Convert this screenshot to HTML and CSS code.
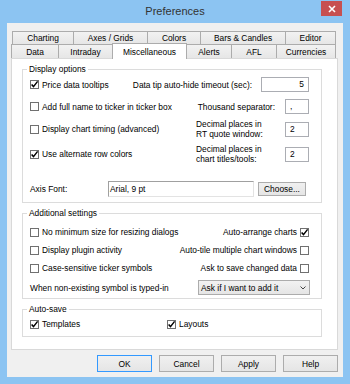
FILE: index.html
```html
<!DOCTYPE html>
<html lang="en">
<head>
  <meta charset="UTF-8">
  <title>Preferences</title>
  <link rel="stylesheet" href="styles.css">
</head>
<body>
  <div class="window">

    <!-- Title bar -->
    <div class="titlebar">
      <div class="title">Preferences</div>
      <div class="close">
        <svg width="8" height="8" viewBox="0 0 8 8"><path d="M1 1 L7 7 M7 1 L1 7" stroke="#fff" stroke-width="1.6"/></svg>
      </div>
    </div>

    <div class="client">

      <!-- Tabs -->
      <div class="tabs">
        <div class="tab-row back">
          <div class="tab t-charting">Charting</div>
          <div class="tab t-axes">Axes / Grids</div>
          <div class="tab t-colors">Colors</div>
          <div class="tab t-bars">Bars &amp; Candles</div>
          <div class="tab t-editor">Editor</div>
        </div>
        <div class="tab-row front">
          <div class="tab t-data">Data</div>
          <div class="tab t-intraday">Intraday</div>
          <div class="tab t-misc active">Miscellaneous</div>
          <div class="tab t-alerts">Alerts</div>
          <div class="tab t-afl">AFL</div>
          <div class="tab t-currencies">Currencies</div>
        </div>
      </div>

      <!-- Tab page -->
      <div class="panel">

        <!-- Display options -->
        <div class="group display">
          <div class="group-title">Display options</div>

          <div class="row r1">
            <div class="check"><span class="box"><svg viewBox="0 0 9 9"><path d="M1.6 4.4 L3.5 6.6 L7.6 1.4"/></svg></span>Price data tooltips</div>
            <div class="field">
              <span class="label">Data tip auto-hide timeout (sec):</span>
              <span class="input wide num">5</span>
            </div>
          </div>

          <div class="row r2">
            <div class="check"><span class="box"></span>Add full name to ticker in ticker box</div>
            <div class="field">
              <span class="label sep">Thousand separator:</span>
              <span class="input small">,</span>
            </div>
          </div>

          <div class="row r3">
            <div class="check"><span class="box"></span>Display chart timing (advanced)</div>
            <div class="field">
              <span class="label two">Decimal places in<br>RT quote window:</span>
              <span class="input small">2</span>
            </div>
          </div>

          <div class="row r4">
            <div class="check"><span class="box"><svg viewBox="0 0 9 9"><path d="M1.6 4.4 L3.5 6.6 L7.6 1.4"/></svg></span>Use alternate row colors</div>
            <div class="field">
              <span class="label two">Decimal places in<br>chart titles/tools:</span>
              <span class="input small">2</span>
            </div>
          </div>

          <div class="row axis">
            <span class="axis-label">Axis Font:</span>
            <span class="fontbox">Arial, 9 pt</span>
            <span class="button choose">Choose...</span>
          </div>
        </div>

        <!-- Additional settings -->
        <div class="group additional">
          <div class="group-title">Additional settings</div>

          <div class="row a1">
            <div class="check"><span class="box"></span>No minimum size for resizing dialogs</div>
            <div class="check right">Auto-arrange charts<span class="box"><svg viewBox="0 0 9 9"><path d="M1.6 4.4 L3.5 6.6 L7.6 1.4"/></svg></span></div>
          </div>

          <div class="row a2">
            <div class="check"><span class="box"></span>Display plugin activity</div>
            <div class="check right">Auto-tile multiple chart windows<span class="box"></span></div>
          </div>

          <div class="row a3">
            <div class="check"><span class="box"></span>Case-sensitive ticker symbols</div>
            <div class="check right">Ask to save changed data<span class="box"></span></div>
          </div>

          <div class="row a4">
            <span>When non-existing symbol is typed-in</span>
            <div class="dropdown">
              <span>Ask if I want to add it</span>
              <svg width="6" height="4" viewBox="0 0 6 4"><path d="M0.5 0.5 L3 3 L5.5 0.5" fill="none" stroke="#444" stroke-width="1"/></svg>
            </div>
          </div>
        </div>

        <!-- Auto-save -->
        <div class="group autosave">
          <div class="group-title">Auto-save</div>
          <div class="row s1">
            <div class="check templates"><span class="box"><svg viewBox="0 0 9 9"><path d="M1.6 4.4 L3.5 6.6 L7.6 1.4"/></svg></span>Templates</div>
            <div class="check"><span class="box"><svg viewBox="0 0 9 9"><path d="M1.6 4.4 L3.5 6.6 L7.6 1.4"/></svg></span>Layouts</div>
          </div>
        </div>

      </div>

      <!-- Dialog buttons -->
      <div class="buttons">
        <span class="button default">OK</span>
        <span class="button">Cancel</span>
        <span class="button">Apply</span>
        <span class="button">Help</span>
      </div>

    </div>
  </div>
</body>
</html>
```

FILE: styles.css
```css
* {
  margin: 0;
  padding: 0;
  box-sizing: border-box;
}

body {
  background-color: #8cc4f2; /* window frame */
  font-family: "Liberation Sans", Arial, sans-serif;
  font-size: 8.4px;
  line-height: 10px;
  color: #000;
}

.window {
  width: 350px;
  height: 384px;
  display: flex;
  flex-direction: column;
}

/* Title bar */
.titlebar {
  height: 23px;
  display: grid;
  grid-template-columns: 1fr auto 1fr;
  align-items: start;
}

.title {
  grid-column: 2;
  margin-top: 6px;
  font-size: 11px;
  line-height: 11px;
  color: #333;
}

.close {
  grid-column: 3;
  justify-self: end;
  width: 21px;
  height: 15px;
  margin: 1px 8px 0 0;
  background-color: #c75050;
  display: flex;
  align-items: center;
  justify-content: center;
}

/* Client area */
.client {
  flex: 1;
  margin: 0 7px 7px;
  padding: 8px 5px 0 4px;
  background-color: #f0f0f0;
  display: flex;
  flex-direction: column;
}

/* Tabs */
.tab-row {
  display: flex;
}

.tab-row.back {
  height: 13px;
  margin-left: 1px;
}

.tab-row.front {
  height: 14px;
}

.tab {
  border: 1px solid #acacac;
  border-bottom: 0;
  margin-left: -1px;
  background: linear-gradient(#f2f2f2, #e6e6e6);
  display: flex;
  align-items: center;
  justify-content: center;
  white-space: nowrap;
}

.tab:first-child {
  margin-left: 0;
}

.tab.active {
  align-self: flex-start;
  height: 16px;
  margin-top: -1px;
  background: #fff;
  position: relative;
  z-index: 1;
}

.t-charting { width: 62px; }
.t-axes { width: 75px; }
.t-colors { width: 54px; }
.t-bars { width: 86px; }
.t-editor { width: 51px; }
.t-data { width: 48px; }
.t-intraday { width: 55px; }
.t-misc { width: 75px; }
.t-alerts { width: 46px; }
.t-afl { width: 46px; }
.t-currencies { width: 60px; }

/* Tab page */
.panel {
  height: 292px;
  border: 1px solid #d9d9d9;
  background-color: #fff;
  padding: 10px 15px 0 10px;
}

/* Group boxes */
.group {
  border: 1px solid #dcdcdc;
  padding: 0 12px 0 7px;
  display: flex;
  flex-direction: column;
}

.group + .group {
  margin-top: 10px;
}

.group.display { height: 134px; }
.group.additional { height: 86px; }
.group.autosave { height: 28px; }

.group-title {
  align-self: flex-start;
  margin: -6px 0 0 -3px;
  padding: 0 2px;
  background-color: #fff;
}

.row {
  display: flex;
  align-items: center;
  justify-content: space-between;
  white-space: nowrap;
}

.r1 { height: 15px; margin-top: 3px; }
.r2 { height: 15px; margin-top: 7px; }
.r3 { height: 20px; margin-top: 5px; }
.r4 { height: 20px; margin-top: 5px; }
.axis { height: 16px; margin-top: 17px; }

.a1 { height: 12px; margin-top: 8px; }
.a2, .a3 { height: 12px; margin-top: 6px; }
.a4 { height: 15px; margin-top: 6px; }

.s1 { height: 12px; margin-top: 4px; justify-content: flex-start; }

/* Checkboxes */
.check {
  display: flex;
  align-items: center;
}

.box {
  width: 9px;
  height: 9px;
  border: 1px solid #707070;
  background-color: #fff;
  margin-right: 3px;
  flex-shrink: 0;
}

.check.right .box {
  margin: 0 0 0 3px;
}

.box svg {
  display: block;
  width: 9px;
  height: 9px;
  margin: -1px 0 0 -1px;
  overflow: visible;
}

.box path {
  fill: none;
  stroke: #000;
  stroke-width: 1.5;
}

.templates {
  width: 137px;
}

/* Edit fields */
.field {
  display: flex;
  align-items: center;
}

.label {
  margin-right: 9px;
}

.label.sep {
  margin-right: 10px;
}

.label.two {
  width: 89px;
  margin-right: 0;
}

.input {
  height: 15px;
  border: 1px solid #abadb3;
  background-color: #fff;
  line-height: 13px;
  padding: 0 4px;
}

.input.wide {
  width: 48px;
}

.input.small {
  width: 24px;
}

.input.num {
  text-align: right;
}

.axis-label {
  width: 78px;
}

.fontbox {
  width: 146px;
  height: 16px;
  border: 1px solid #e3e3e3;
  border-top-color: #a0a0a0;
  border-left-color: #a0a0a0;
  padding-left: 1px;
  line-height: 14px;
}

/* Buttons */
.button {
  width: 55px;
  height: 17px;
  border: 1px solid #acacac;
  background: linear-gradient(#f0f0f0, #e5e5e5);
  display: flex;
  align-items: center;
  justify-content: center;
}

.button.default {
  border-color: #3399ff;
}

.button.choose {
  width: 48px;
  height: 14px;
  margin: 0 3px 0 auto;
}

.dropdown {
  width: 112px;
  height: 15px;
  margin-right: -1px;
  border: 1px solid #acacac;
  background: linear-gradient(#f2f2f2, #e5e5e5);
  padding: 0 3px 0 2px;
  display: flex;
  align-items: center;
  justify-content: space-between;
}

.buttons {
  margin-top: 5px;
  display: flex;
  justify-content: flex-end;
  gap: 7px;
}
```
